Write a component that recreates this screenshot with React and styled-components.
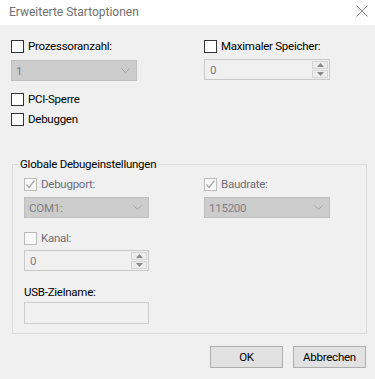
import React from 'react';
import styled, { createGlobalStyle } from 'styled-components';

const GlobalStyle = createGlobalStyle`
  html, body {
    margin: 0;
    padding: 0;
    background: #f0f0f0;
  }
  * {
    box-sizing: border-box;
  }
`;

const Window = styled.div`
  width: 375px;
  height: 379px;
  background: #f0f0f0;
  font-family: Roboto, 'Liberation Sans', sans-serif;
  font-size: 11.5px;
  letter-spacing: -0.25px;
  color: #000;
  overflow: hidden;
`;

const TitleBar = styled.div`
  height: 25px;
  background: #ffffff;
  display: flex;
  align-items: center;
  justify-content: space-between;
  padding: 0 7px 1px 9px;
`;

const Title = styled.span`
  color: #6f6f6f;
  font-size: 12px;
  letter-spacing: 0;
`;

const CloseButton = styled.div`
  width: 12px;
  height: 12px;
  display: flex;
  margin-top: -2px;
`;

const Body = styled.div`
  padding: 15px 8px 0 11px;
`;

const TwoCols = styled.div`
  display: grid;
  grid-template-columns: ${(p) => p.$left}px 1fr;
  row-gap: ${(p) => p.$rowGap || 0}px;
`;

const Field = styled.div`
  display: flex;
  flex-direction: column;
  gap: ${(p) => p.$gap}px;
`;

const CheckRow = styled.label`
  display: flex;
  align-items: center;
  gap: 4px;
  height: 13px;
  line-height: 13px;
  color: ${(p) => (p.$disabled ? '#6d6d75' : '#000')};
  margin-top: ${(p) => p.$mt || 0}px;
`;

const Box = styled.span`
  width: 13px;
  height: 13px;
  flex: none;
  border: 1px solid ${(p) => (p.$disabled ? '#bcbcbc' : '#333333')};
  background: ${(p) => (p.$disabled ? '#f9f9f9' : '#ffffff')};
  display: flex;
  align-items: center;
  justify-content: center;
`;

const Combo = styled.div`
  width: ${(p) => p.$w}px;
  height: 21px;
  background: #cccccc;
  border: 1px solid #bfbfbf;
  color: #7d7d85;
  display: flex;
  align-items: center;
  justify-content: space-between;
  padding: 0 6px 0 4px;
`;

const Spin = styled.div`
  width: ${(p) => p.$w}px;
  height: 21px;
  background: #f0f0f0;
  border: 1px solid #c8c8c8;
  color: #7d7d85;
  display: flex;
  align-items: stretch;
`;

const SpinValue = styled.span`
  flex: 1;
  display: flex;
  align-items: center;
  padding-left: 5px;
`;

const SpinButtons = styled.div`
  width: 17px;
  display: flex;
  flex-direction: column;
  gap: 1px;
  padding: 1px 1px 1px 0;
`;

const SpinButton = styled.div`
  flex: 1;
  background: #ececec;
  border: 1px solid #d4d4d4;
  display: flex;
  align-items: center;
  justify-content: center;
`;

const CheckList = styled.div`
  display: flex;
  flex-direction: column;
  gap: 7px;
  margin-top: 12px;
`;

const Group = styled.div`
  position: relative;
  margin: 38px 0 0 1px;
  width: 355px;
  border: 1px solid #dcdcdc;
  padding: 13px 11px 9px 11px;
`;

const Legend = styled.span`
  position: absolute;
  top: -8px;
  left: 5px;
  padding: 0 2px;
  background: #f0f0f0;
  line-height: 15px;
`;

const FieldLabel = styled.div`
  margin-top: 14px;
  line-height: 15px;
`;

const TextBox = styled.div`
  margin-top: 2px;
  width: 125px;
  height: 22px;
  border: 1px solid #cccccc;
  background: #f0f0f0;
`;

const ButtonRow = styled.div`
  display: flex;
  justify-content: flex-end;
  gap: 10px;
  margin-top: 12px;
  padding-right: 1px;
`;

const Button = styled.div`
  width: 73px;
  height: 22px;
  background: #e1e1e1;
  border: 1px solid #adadad;
  display: flex;
  align-items: center;
  justify-content: center;
`;

const Chevron = () => (
  <svg width="9" height="5" viewBox="0 0 9 5">
    <path d="M0.5 0.5 L4.5 4.5 L8.5 0.5" fill="none" stroke="#a6a6a6" strokeWidth="1" />
  </svg>
);

const Arrow = ({ up }) => (
  <svg width="7" height="4" viewBox="0 0 7 4">
    <path d={up ? 'M0 4 L3.5 0 L7 4 Z' : 'M0 0 L3.5 4 L7 0 Z'} fill="#8a8a8a" />
  </svg>
);

const Tick = () => (
  <svg width="11" height="11" viewBox="0 0 11 11">
    <path d="M1.5 5.5 L4 8.5 L9.5 1.5" fill="none" stroke="#a8a8a8" strokeWidth="1.3" />
  </svg>
);

const Check = ({ label, disabled, checked, mt }) => (
  <CheckRow $disabled={disabled} $mt={mt}>
    <Box $disabled={disabled}>{checked && <Tick />}</Box>
    {label}
  </CheckRow>
);

const ComboBox = ({ value, w }) => (
  <Combo $w={w}>
    <span>{value}</span>
    <Chevron />
  </Combo>
);

const SpinBox = ({ value, w }) => (
  <Spin $w={w}>
    <SpinValue>{value}</SpinValue>
    <SpinButtons>
      <SpinButton><Arrow up /></SpinButton>
      <SpinButton><Arrow /></SpinButton>
    </SpinButtons>
  </Spin>
);

const App = () => (
  <Window>
    <GlobalStyle />
    <TitleBar>
      <Title>Erweiterte Startoptionen</Title>
      <CloseButton>
        <svg width="12" height="12" viewBox="0 0 12 12">
          <path d="M0.5 0.5 L11.5 11.5 M11.5 0.5 L0.5 11.5" stroke="#8c8c8c" strokeWidth="1" />
        </svg>
      </CloseButton>
    </TitleBar>
    <Body>
      <TwoCols $left={193}>
        <Field $gap={7}>
          <Check label="Prozessoranzahl:" />
          <ComboBox value="1" w={126} />
        </Field>
        <Field $gap={6}>
          <Check label="Maximaler Speicher:" />
          <SpinBox value="0" w={126} />
        </Field>
      </TwoCols>

      <CheckList>
        <Check label="PCI-Sperre" />
        <Check label="Debuggen" />
      </CheckList>

      <Group>
        <Legend>Globale Debugeinstellungen</Legend>
        <TwoCols $left={180} $rowGap={14}>
          <Field $gap={6}>
            <Check label="Debugport:" disabled checked />
            <ComboBox value="COM1:" w={125} />
          </Field>
          <Field $gap={6}>
            <Check label="Baudrate:" disabled checked />
            <ComboBox value="115200" w={126} />
          </Field>
          <Field $gap={5}>
            <Check label="Kanal:" disabled />
            <SpinBox value="0" w={125} />
          </Field>
        </TwoCols>
        <FieldLabel>USB-Zielname:</FieldLabel>
        <TextBox />
      </Group>

      <ButtonRow>
        <Button>OK</Button>
        <Button>Abbrechen</Button>
      </ButtonRow>
    </Body>
  </Window>
);

export default App;
